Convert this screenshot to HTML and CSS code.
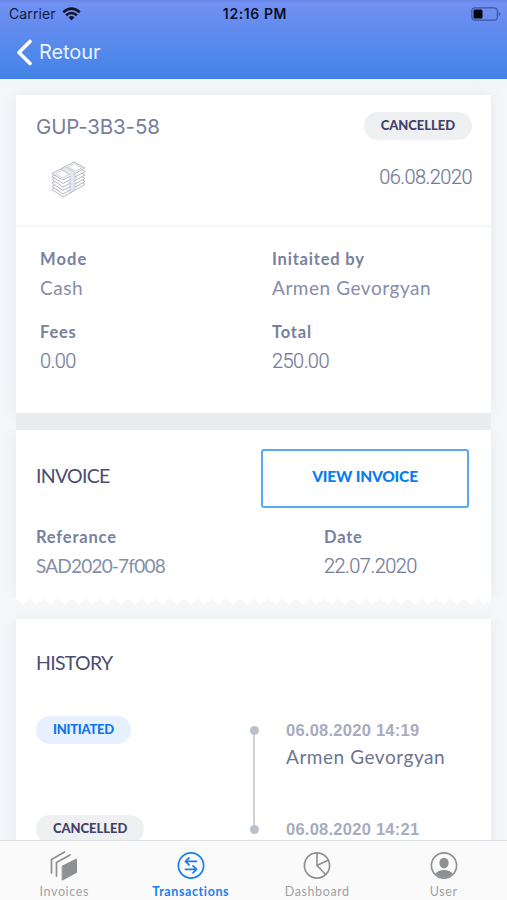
FILE: index.html
```html
<!DOCTYPE html>
<html lang="en">
<head>
<meta charset="utf-8">
<title>Transaction</title>
<link rel="stylesheet" href="styles.css">
</head>
<body>
<div class="app">
  <header class="header">
    <div class="status">
      <div class="carrier"><span>Carrier</span>
        <svg width="19" height="14" viewBox="0 0 19 14" fill="none" stroke="#10142c" stroke-width="2.5"><path d="M1.2 5.2Q9.5-2 17.8 5.2"/><path d="M4 8.3Q9.500 3.600 15 8.300"/><path d="M6.500 10.300Q9.500 7.900 12.500 10.300L9.500 13.500Z" fill="#10142c" stroke="none"/></svg>
      </div>
      <div class="clock">12:16 PM</div>
      <svg class="battery" width="30" height="14" viewBox="0 0 30 14"><rect x=".8" y=".8" width="25.500" height="12.400" rx="3.500" fill="none" stroke="#4055a0" stroke-width="1.200"/><rect x="2.500" y="2.500" width="9" height="9" rx="1.500" fill="#050510"/><path d="M27.700 5v4q1.800-.6 1.800-2t-1.800-2" fill="#4055a0"/></svg>
    </div>
    <div class="nav">
      <svg width="17" height="27" viewBox="0 0 17 27" fill="none" stroke="#fff" stroke-width="3.600" stroke-linecap="round" stroke-linejoin="round"><path d="M14 2.500 3 13.500 14 24.500"/></svg>
      <span>Retour</span>
    </div>
  </header>
  <main class="content">
    <section class="card summary">
      <div class="summary-head">
        <div class="row"><span class="code">GUP-3B3-58</span><span class="pill">CANCELLED</span></div>
        <div class="row second">
          <svg class="cash" width="36" height="38" viewBox="0 0 36 38" fill="#fdfdfe" stroke="#b7b8c6" stroke-width="1" stroke-linejoin="round">
            <path d="M1 28.500 12 36 34 23.500 23 16Z"/><path d="M1 25.500 12 33 34 20.500 23 13Z"/><path d="M1 22 12 29.500 34 17.500 23 10Z"/><path d="M1 18.500 12 26 34 14 23 6.500Z"/><path d="M1 15.500 12 22.500 34 10.500 23 3.500Z"/><path d="M1 12.500 12 19 34 7 23 1Z"/>
            <path d="M4.500 12.700 12 16.800 18.500 13 11 9ZM17 6.200 24.500 10 31 6.900 23 2.500Z" stroke-width=".6"/>
            <path d="M10 8 19 14V32L24 29V11.500L14.500 5.500Z" fill="#e5e7ed" stroke-width=".7"/>
          </svg>
          <span class="value num date-main">06.08.2020</span>
        </div>
      </div>
      <div class="details">
        <div><div class="label l-mode">Mode</div><div class="value">Cash</div></div>
        <div><div class="label">Initaited by</div><div class="value">Armen Gevorgyan</div></div>
        <div><div class="label">Fees</div><div class="value num">0.00</div></div>
        <div><div class="label">Total</div><div class="value num">250.00</div></div>
      </div>
    </section>
    <div class="gap"></div>
    <section class="card invoice">
      <div class="row invoice-head"><h2>INVOICE</h2><button>VIEW INVOICE</button></div>
      <div class="invoice-details">
        <div><div class="label">Referance</div><div class="value ref">SAD2020-7f008</div></div>
        <div><div class="label">Date</div><div class="value num">22.07.2020</div></div>
      </div>
    </section>
    <div class="zigzag"><svg width="475" height="8"><defs><pattern id="teeth" width="14" height="8" patternUnits="userSpaceOnUse"><path d="M0 0h14L7 7Z" fill="#fff"/></pattern></defs><rect width="475" height="8" fill="url(#teeth)"/></svg></div>
    <section class="card history">
      <h2 class="history-title">HISTORY</h2>
      <div class="event">
        <div><span class="pill blue">INITIATED</span></div>
        <div class="track"><i class="dot"></i><i class="line"></i></div>
        <div><div class="time">06.08.2020 14:19</div><div class="value person">Armen Gevorgyan</div></div>
      </div>
      <div class="event">
        <div><span class="pill">CANCELLED</span></div>
        <div class="track"><i class="dot"></i></div>
        <div><div class="time">06.08.2020 14:21</div></div>
      </div>
    </section>
  </main>
  <nav class="tabs">
    <a class="tab"><svg width="28" height="30" viewBox="0 0 28 30" fill="none" stroke="#8e8f90" stroke-width="1.700" stroke-linejoin="round" stroke-linecap="round"><path d="M1.500 22V8.500L14.500 1"/><path d="M6.500 25V11.500L20 4"/><path d="M12.500 15 26.500 8V21.500L12.500 29Z" fill="#8e8f90" stroke-width="1"/></svg><span>Invoices</span></a>
    <a class="tab active"><svg width="28" height="30" viewBox="0 0 28 30" fill="none" stroke="currentColor" stroke-width="1.700" stroke-linecap="round" stroke-linejoin="round"><circle cx="14" cy="14.500" r="12.600"/><path d="M19.500 10.300H8.500M12 6.800 8.500 10.300 12 13.800M8.500 18.300H19.500M16 14.800 19.500 18.300 16 21.800"/></svg><span>Transactions</span></a>
    <a class="tab"><svg width="28" height="30" viewBox="0 0 28 30" fill="none" stroke="#8e8f90" stroke-width="1.600"><circle cx="14" cy="14.500" r="12.600"/><path d="M14 2V14.500L25.500 9M14 14.500 22.500 23.500"/></svg><span>Dashboard</span></a>
    <a class="tab"><svg width="28" height="30" viewBox="0 0 28 30" fill="none" stroke="#8e8f90" stroke-width="1.600"><circle cx="14" cy="14.500" r="12.600"/><ellipse cx="14" cy="12" rx="4.600" ry="5.200" fill="#8e8f90" stroke="none"/><path d="M5.500 22.500Q8 19 14 19T22.500 22.500Q19 26.500 14 26.500T5.500 22.500Z" fill="#8e8f90" stroke="none"/></svg><span>User</span></a>
  </nav>
</div>
</body>
</html>
```
FILE: styles.css
```css
* { box-sizing: border-box; }
body { margin: 0; font-family: Lato, sans-serif; }
.app { width: 507px; height: 900px; overflow: hidden; display: flex; flex-direction: column; background: #f4f7fa; }
.header { height: 79px; flex: none; background: linear-gradient(#6984e5, #7190f2 4%, #4785e8 90%, #4382e4); }
.status { height: 27px; display: grid; grid-template-columns: 1fr auto 1fr; align-items: center; padding: 0 6px 0 9px; font: 400 14px/27px Inter, sans-serif; color: #111a3c; }
.carrier { display: flex; align-items: center; gap: 6px; letter-spacing: .1px; }
.clock { font-weight: 600; color: #0b1029; letter-spacing: .6px; }
.battery { justify-self: end; }
.nav { height: 51px; display: flex; align-items: center; gap: 6px; padding-left: 16px; color: #eaf2ff; font: 400 20px/51px Inter, sans-serif; letter-spacing: -.1px; }
.content { flex: 1; min-height: 0; overflow: hidden; padding: 16px 16px 0; }
.card { width: 475px; background: #fff; }
.row { display: flex; justify-content: space-between; align-items: center; }
.summary { height: 318px; box-shadow: 0 0 15px #e4e7ec; }
.summary-head { height: 132px; padding: 17px 19px 0 20px; border-bottom: 2px solid #f4f6f8; }
.summary-head .row:first-child { height: 28px; }
.code { font: 400 20.5px/28px Inter, sans-serif; color: #777f9b; letter-spacing: -.15px; padding-top: 2px; }
.pill { display: inline-block; height: 28px; padding: 0 17px; border-radius: 14px; background: #eef0f2; color: #424268; font: 900 13px/27px Lato, sans-serif; letter-spacing: -.05px; white-space: nowrap; }
.blue { background: #e6f0fe; color: #0d76ee; letter-spacing: -.25px; }
.second { height: 78px; padding-left: 15px; }
.cash { margin-top: 2px; }
.date-main { margin-top: -5px; }
.value { font-size: 19px; line-height: 28px; color: #858ea9; letter-spacing: .55px; white-space: nowrap; }
.num { font: 300 20px/28px Roboto, sans-serif; letter-spacing: -.55px; color: #747c99; -webkit-text-stroke: .2px #747c99; }
.ref { letter-spacing: -.8px; }
.label { font-weight: 700; font-size: 16.5px; line-height: 30px; color: #77819e; white-space: nowrap; letter-spacing: .8px; }
.l-mode { letter-spacing: 1.1px; }
.details { display: grid; grid-template-columns: 232px 1fr; row-gap: 15px; padding: 17px 24px 0; }
.gap { height: 17px; background: #eaecef; position: relative; }
.invoice { height: 168px; padding: 19px 22px 0 20px; box-shadow: 0 0 15px #e6e9ed; clip-path: inset(0 -16px 0 -16px); }
h2 { margin: 0; font: 400 19.5px/28px Lato, sans-serif; color: #4c4d70; letter-spacing: -.7px; }
.invoice-head { align-items: flex-start; }
.invoice-head h2 { margin-top: 13px; }
button { width: 208px; height: 59px; padding: 0 0 6px; border: 2px solid #58a8f2; border-radius: 3px; background: #fff; color: #087df0; font: 900 15.5px/20px Lato, sans-serif; letter-spacing: -.2px; }
.invoice-details { display: grid; grid-template-columns: 288px 1fr; padding-top: 14px; }
.zigzag { height: 21px; background: linear-gradient(#f8f9fa, #f0f2f4); }
.zigzag svg { display: block; }
.history { height: 300px; padding: 0 20px; box-shadow: 0 0 15px #e4e7ec; clip-path: inset(0 -16px 0 -16px); }
.history-title { padding-top: 30px; height: 97px; }
.event { display: grid; grid-template-columns: 213px 10px 1fr; height: 99px; }
.track { display: flex; flex-direction: column; align-items: center; padding-top: 10px; }
.dot { width: 9px; height: 9px; border-radius: 50%; background: #bbc0cb; flex: none; }
.line { width: 2px; height: 90px; background: #cdd0d6; }
.event > :last-child { padding-left: 27px; }
.time { font: 700 16.5px/28px "Liberation Sans", sans-serif; color: #a7acbe; white-space: nowrap; letter-spacing: .25px; }
.person { line-height: 26px; color: #6c7592; }
.tabs { height: 60px; flex: none; display: grid; grid-template-columns: repeat(4, 126.5px); padding-left: 1px; background: #fafafb; border-top: 1px solid #dedfe1; }
.tab { display: flex; flex-direction: column; align-items: center; padding-top: 10px; color: #a0a1a3; font: 400 12.5px/18px Lato, sans-serif; letter-spacing: .6px; }
.tab span { margin-top: 2px; }
.active { color: #187eef; font-weight: 700; }
```
